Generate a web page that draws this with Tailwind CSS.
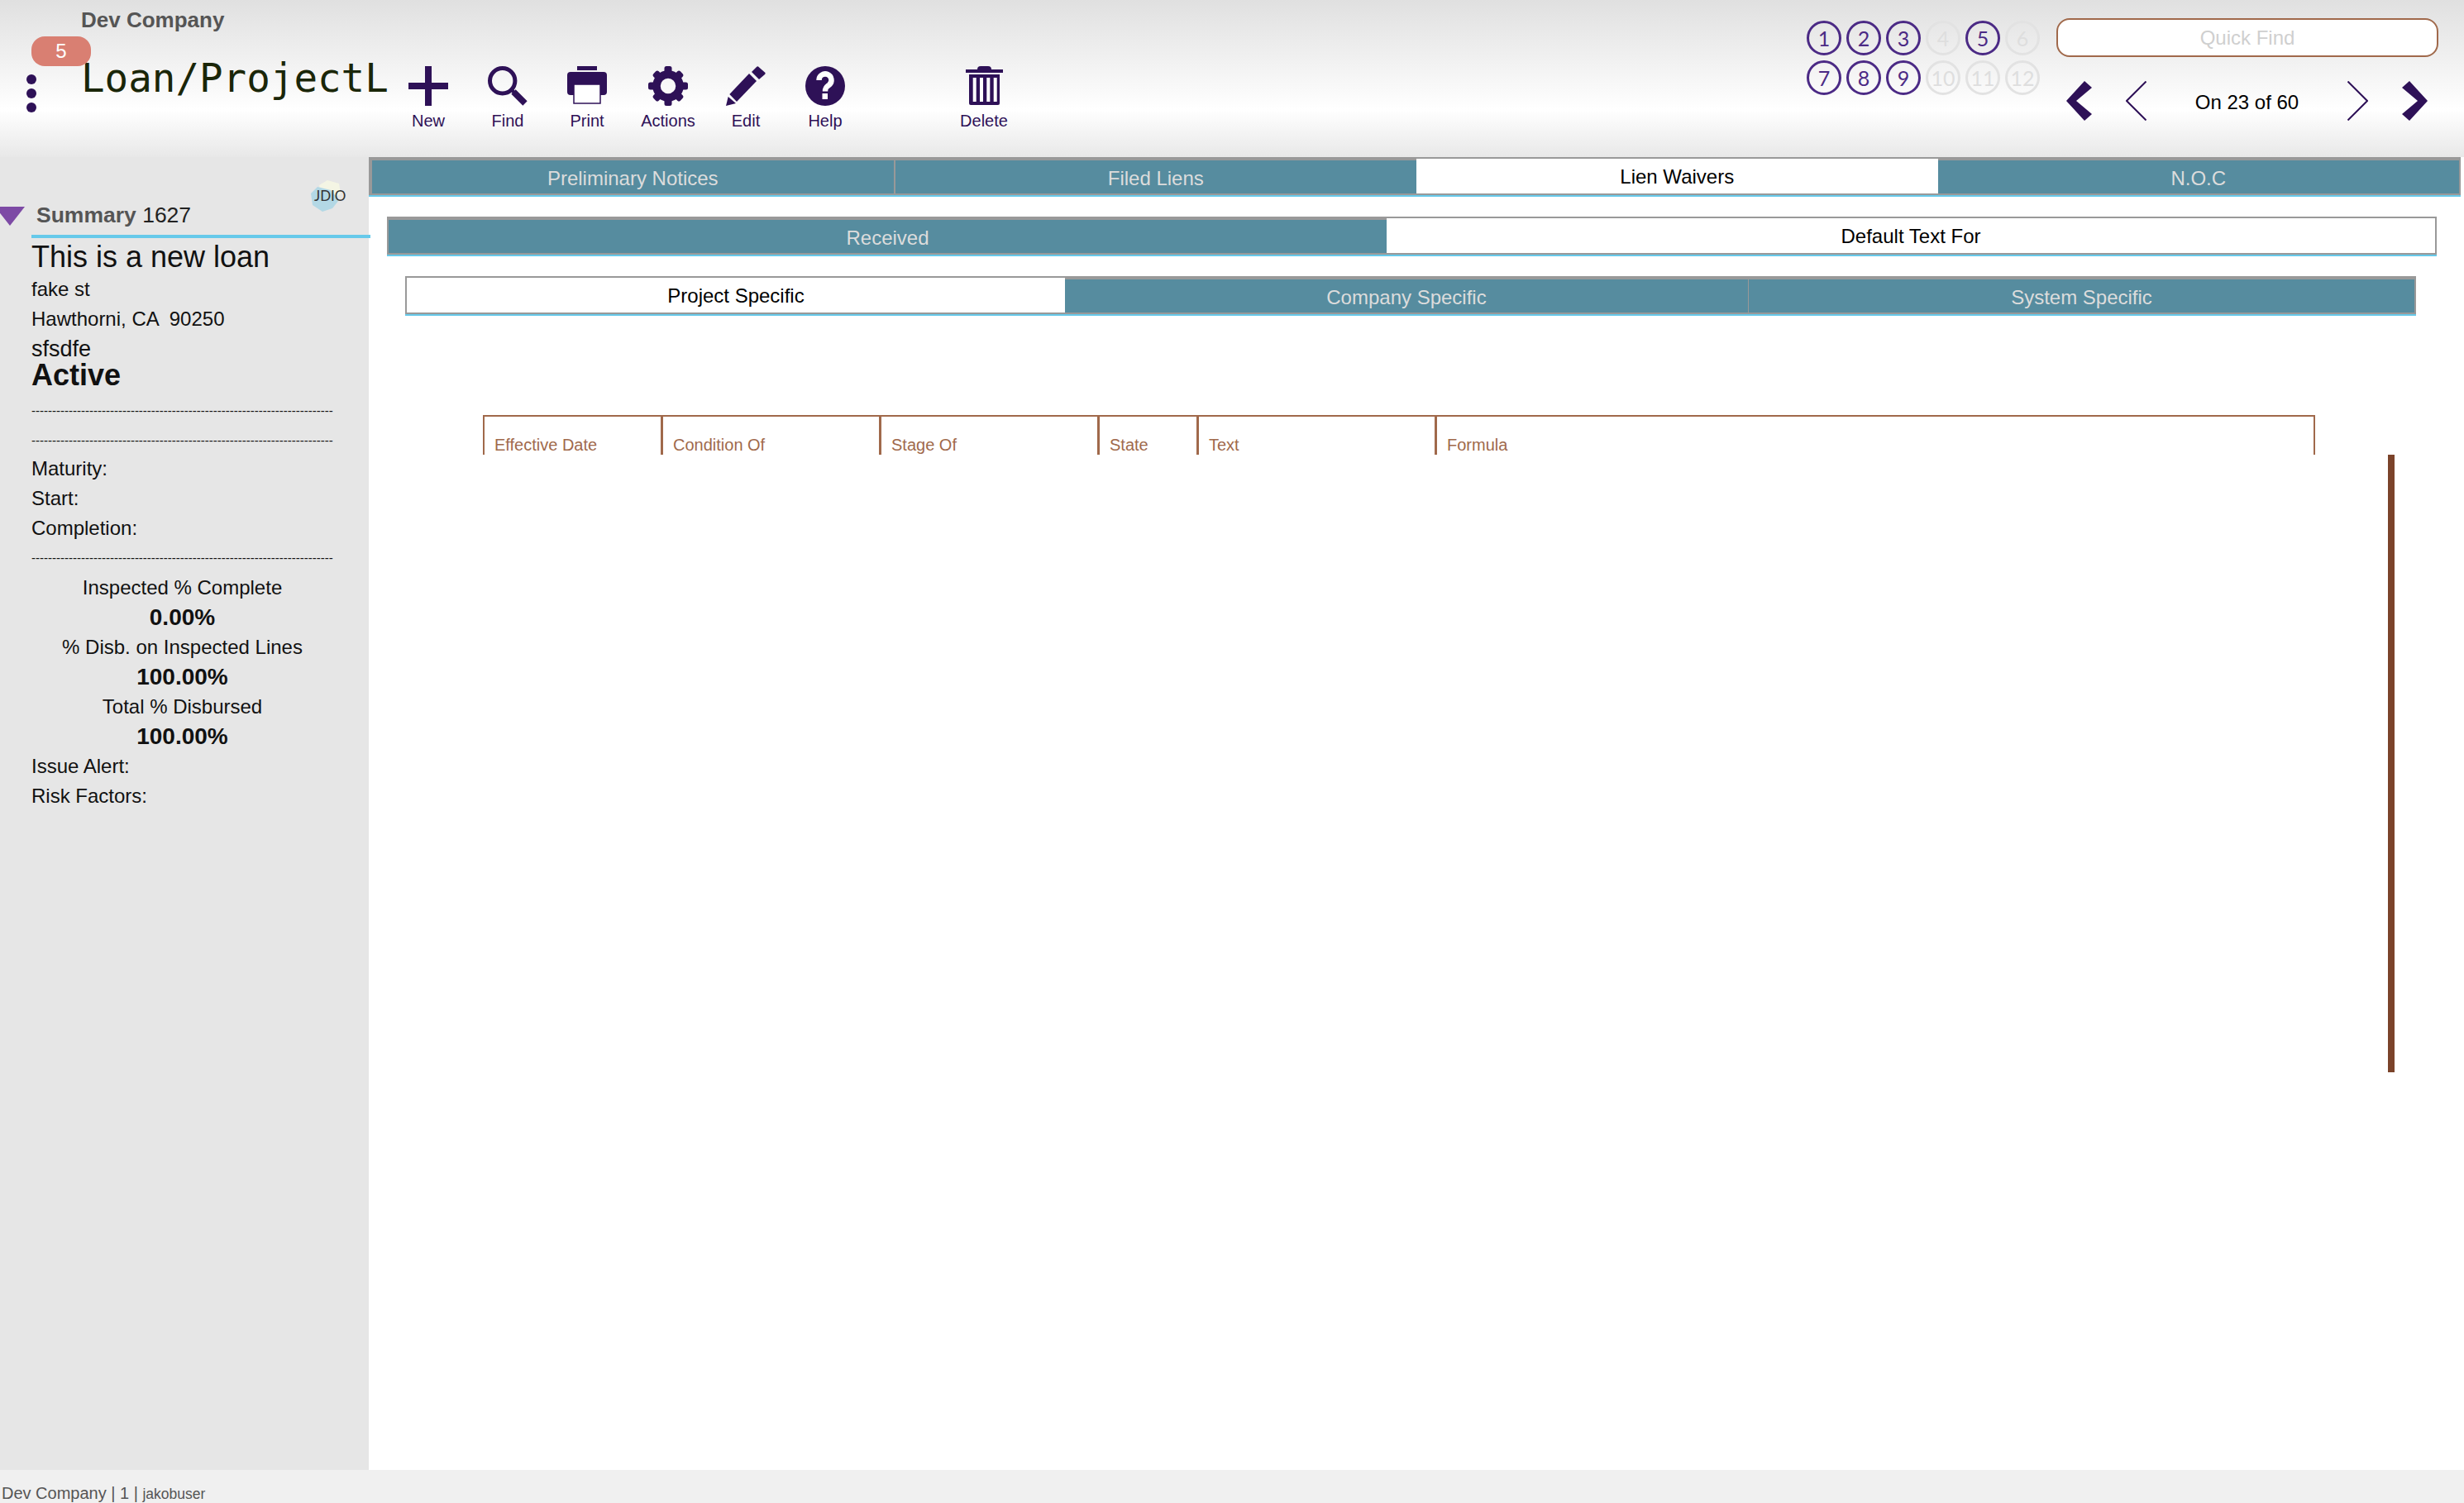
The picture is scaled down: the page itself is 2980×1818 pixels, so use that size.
<!DOCTYPE html>
<html lang="en">
<head>
    <meta charset="UTF-8">
    <title>Loan/Project Lien Waivers</title>
    <script src="https://cdn.jsdelivr.net/npm/@tailwindcss/browser@4"></script>
</head>
<body class="font-['Liberation_Sans',Arial,sans-serif] text-[#111]">
<div class="flex flex-col h-[1818px] w-[2980px] overflow-hidden bg-white">

    <!-- Top bar -->
    <header class="flex h-[190px] shrink-0 bg-linear-to-b from-[#e0e0e0] via-white via-[70%] to-[#e8e8e8]">
        <div class="relative w-[470px] shrink-0 pl-[98px] pt-[9px]">
            <div class="text-[26px] leading-[30px] font-bold text-[#555]">Dev Company</div>
            <div class="mt-[28px] font-['DejaVu_Sans_Mono',monospace] text-[47.500px] leading-[56px] whitespace-nowrap text-[#1a2608]">Loan/ProjectL</div>
            <div class="absolute left-[38px] top-[44px] w-[72px] h-[36px] rounded-[16px] bg-[#d97f72] text-white text-[24px] leading-[36px] text-center">5</div>
            <div class="absolute left-[32px] top-[90px] flex flex-col gap-[5px]">
                <span class="block w-[12px] h-[12px] rounded-full bg-[#2e1157]"></span>
                <span class="block w-[12px] h-[12px] rounded-full bg-[#2e1157]"></span>
                <span class="block w-[12px] h-[12px] rounded-full bg-[#2e1157]"></span>
            </div>
        </div>

        <!-- Toolbar -->
        <nav class="flex pt-[80px] text-[#2e1157] text-[20px] leading-[24px] text-center">
            <a class="block w-[96px]">
                <svg class="w-[48px] h-[48px] mx-auto mb-[6px]" viewBox="0 0 48 48" fill="#2e1157"><rect x="20" width="8" height="48"/><rect y="20" width="48" height="8"/></svg>
                New
            </a>
            <a class="block w-[96px]">
                <svg class="w-[48px] h-[48px] mx-auto mb-[6px]" viewBox="0 0 48 48" fill="none" stroke="#2e1157"><circle cx="17.700" cy="17.700" r="15.200" stroke-width="5"/><path d="M28 28 L32 32" stroke-width="4"/><path d="M31 31 L45 45" stroke-width="7.500"/></svg>
                Find
            </a>
            <a class="block w-[96px]">
                <svg class="w-[48px] h-[48px] mx-auto mb-[6px]" viewBox="0 0 48 48"><rect x="12" width="24" height="5" fill="#2e1157"/><path d="M4 7h40a4 4 0 0 1 4 4v20a4 4 0 0 1-4 4H4a4 4 0 0 1-4-4V11a4 4 0 0 1 4-4z" fill="#2e1157"/><rect x="8" y="22" width="32" height="23" fill="#fff" stroke="#2e1157" stroke-width="1.500"/></svg>
                Print
            </a>
            <a class="block w-[96px] pl-[4px]">
                <svg class="w-[48px] h-[48px] mx-auto mb-[6px]" viewBox="0 0 48 48" fill="#2e1157">
                    <circle cx="24" cy="24" r="14" fill="none" stroke="#2e1157" stroke-width="9.500"/>
                    <rect x="19.500" y="0" width="9" height="12" rx="2.500"/><rect x="19.500" y="36" width="9" height="12" rx="2.500"/>
                    <rect x="0" y="19.500" width="12" height="9" rx="2.500"/><rect x="36" y="19.500" width="12" height="9" rx="2.500"/>
                    <rect x="19.500" y="1" width="9" height="12" rx="2.500" transform="rotate(45 24 24)"/><rect x="19.500" y="1" width="9" height="12" rx="2.500" transform="rotate(135 24 24)"/>
                    <rect x="19.500" y="1" width="9" height="12" rx="2.500" transform="rotate(225 24 24)"/><rect x="19.500" y="1" width="9" height="12" rx="2.500" transform="rotate(315 24 24)"/>
                </svg>
                Actions
            </a>
            <a class="block w-[96px]">
                <svg class="w-[48px] h-[48px] mx-auto mb-[6px]" viewBox="0 0 48 48" fill="#2e1157"><path d="M39 0.500 L47.500 8 Q48 9 47 10 L40 16 L31 7 L37 1 Q38 0 39 0.500 Z"/><path d="M28 9 L37 18 L13 43 L4.300 34 Z"/><path d="M2.700 37 L12 45 L0 48 Z"/></svg>
                Edit
            </a>
            <a class="block w-[96px]">
                <svg class="w-[48px] h-[48px] mx-auto mb-[6px]" viewBox="0 0 48 48"><circle cx="24" cy="24" r="24" fill="#2e1157"/><path d="M16.500 17 a7.500 7.500 0 1 1 12.500 5.500 c-3 2.500 -5 3 -5 8" fill="none" stroke="#fff" stroke-width="6.500"/><rect x="20.500" y="33" width="6.500" height="7" fill="#fff"/></svg>
                Help
            </a>
            <div class="w-[96px]"></div>
            <a class="block w-[96px]">
                <svg class="w-[48px] h-[48px] mx-auto mb-[6px]" viewBox="0 0 48 48" fill="#2e1157"><path d="M16 4 Q16 0 20 0 H29 Q33 0 33 4 V5 H16 Z"/><rect x="2" y="4" width="45" height="4"/><path d="M6 10h37v35a2 2 0 0 1-2 2H8a2 2 0 0 1-2-2z"/><g fill="#fff"><rect x="10.700" y="14" width="4" height="29"/><rect x="19" y="14" width="4" height="29"/><rect x="27.300" y="14" width="4" height="29"/><rect x="35.700" y="14" width="4" height="29"/></g></svg>
                Delete
            </a>
        </nav>

        <!-- Record slots -->
        <div class="ml-auto pt-[25px] grid grid-cols-[repeat(6,42px)] auto-rows-[42px] gap-[6px] font-['Lato',sans-serif] text-[25px] text-center h-fit">
            <span class="rounded-full border-[3px] border-[#4b2a85] leading-[36px] text-[#4b2a85]">1</span>
            <span class="rounded-full border-[3px] border-[#4b2a85] leading-[36px] text-[#4b2a85]">2</span>
            <span class="rounded-full border-[3px] border-[#4b2a85] leading-[36px] text-[#4b2a85]">3</span>
            <span class="rounded-full border-[3px] border-[#e2e2e2] leading-[36px] text-[#dedede]">4</span>
            <span class="rounded-full border-[3px] border-[#4b2a85] leading-[36px] text-[#4b2a85]">5</span>
            <span class="rounded-full border-[3px] border-[#e2e2e2] leading-[36px] text-[#dedede]">6</span>
            <span class="rounded-full border-[3px] border-[#4b2a85] leading-[36px] text-[#4b2a85]">7</span>
            <span class="rounded-full border-[3px] border-[#4b2a85] leading-[36px] text-[#4b2a85]">8</span>
            <span class="rounded-full border-[3px] border-[#4b2a85] leading-[36px] text-[#4b2a85]">9</span>
            <span class="rounded-full border-[3px] border-[#e2e2e2] leading-[36px] text-[#dedede]">10</span>
            <span class="rounded-full border-[3px] border-[#e2e2e2] leading-[36px] text-[#dedede]">11</span>
            <span class="rounded-full border-[3px] border-[#e2e2e2] leading-[36px] text-[#dedede]">12</span>
        </div>

        <!-- Quick find and record nav -->
        <div class="w-[462px] ml-[20px] mr-[31px] pt-[22px] shrink-0">
            <div class="h-[47px] rounded-[16px] border-2 border-[#a0694b] bg-white text-[24px] leading-[43px] text-center text-[#cfcfcf]">Quick Find</div>
            <div class="mt-[29px] flex items-center h-[48px] text-[24px] text-black">
                <svg class="ml-[12px] w-[31px] h-[48px]" viewBox="0 0 31 48" fill="#2e1157"><path d="M22 0 L31 8 L12 24 L31 40 L22 48 L0 24 Z"/></svg>
                <svg class="ml-[41px] w-[25px] h-[48px]" viewBox="0 0 25 48" fill="none" stroke="#2e1157" stroke-width="2"><path d="M24.500 0.500 L1 24 L24.500 47.500"/></svg>
                <span class="flex-1 text-center pt-[4px]">On 23 of 60</span>
                <svg class="mr-[41px] w-[25px] h-[48px]" viewBox="0 0 25 48" fill="none" stroke="#2e1157" stroke-width="2"><path d="M0.500 0.500 L24 24 L0.500 47.500"/></svg>
                <svg class="mr-[13px] w-[31px] h-[48px]" viewBox="0 0 31 48" fill="#2e1157"><path d="M9 0 L0 8 L19 24 L0 40 L9 48 L31 24 Z"/></svg>
            </div>
        </div>
    </header>

    <div class="flex flex-1 min-h-0">
        <!-- Sidebar -->
        <aside class="relative w-[446px] shrink-0 bg-[#e6e6e6] text-[24px] leading-[36px]">
            <svg class="absolute left-0 top-[60px] w-[30px] h-[23px]" viewBox="0 0 30 23"><path d="M-6 0 H30 L12 23 Z" fill="#7d4aa5"/></svg>
            <svg class="absolute left-[374px] top-[28px] w-[40px] h-[38px]" viewBox="0 0 40 38"><path d="M12 6 L22 0 L36 4 L38 16 L30 22 L14 16 Z" fill="#f4f5e4"/><path d="M10 8 L26 12 L36 24 L28 34 L16 38 L4 30 L2 16 Z" fill="#b3d8e5" /></svg>
            <div class="absolute left-[380px] top-[35px] text-[17px] leading-[24px] font-['Lato',sans-serif] text-[#333]">JDIO</div>

            <div class="pl-[44px] pt-[53px] h-[94px] text-[26.500px] leading-[34px] text-[#222]"><span class="font-bold text-[#555]">Summary</span> 1627</div>
            <div class="ml-[38px] w-[410px] h-[4px] bg-[#66c9ea] relative"></div>

            <div class="pl-[38px] pr-[43px]">
                <div class="mt-[2px] text-[36px] leading-[42px]">This is a new loan</div>
                <div>fake st</div>
                <div class="whitespace-pre">Hawthorni, CA  90250</div>
                <div class="text-[27px]">sfsdfe</div>
                <div class="text-[36px] font-bold leading-[28px]">Active</div>
                <div class="mt-[11px] h-[36px] text-[15px] whitespace-nowrap">-------------------------------------------------------------------------</div>
                <div class="h-[36px] text-[15px] whitespace-nowrap">-------------------------------------------------------------------------</div>
                <div class="mt-[-2px]">Maturity:</div>
                <div>Start:</div>
                <div>Completion:</div>
                <div class="h-[36px] text-[15px] whitespace-nowrap">-------------------------------------------------------------------------</div>
                <div class="text-center">
                    <div>Inspected % Complete</div>
                    <div class="text-[28px] font-bold">0.00%</div>
                    <div>% Disb. on Inspected Lines</div>
                    <div class="text-[28px] font-bold">100.00%</div>
                    <div>Total % Disbursed</div>
                    <div class="text-[28px] font-bold">100.00%</div>
                </div>
                <div>Issue Alert:</div>
                <div>Risk Factors:</div>
            </div>
        </aside>

        <!-- Main -->
        <main class="flex-1 min-w-0 text-[24px] text-center relative">
            <div class="flex h-[48px] ml-0 mr-[4px] text-[#dcdcdc] border-b-2 border-[#66c9ea]">
                <div class="flex-1 bg-[#568c9f] border-t-4 border-l-4 border-r border-b-2 border-[#999] leading-[44px]">Preliminary Notices</div>
                <div class="flex-1 bg-[#568c9f] border-t-4 border-l border-b-2 border-[#999] leading-[44px]">Filed Liens</div>
                <div class="flex-1 bg-white border-t-2 border-b-2 border-[#999] text-black leading-[44px]">Lien Waivers</div>
                <div class="flex-1 bg-[#568c9f] border-t-4 border-r-2 border-b-2 border-[#999] leading-[44px]">N.O.C</div>
            </div>

            <div class="flex h-[48px] mt-[24px] ml-[22px] mr-[33px] text-[#dcdcdc] border-b-2 border-[#66c9ea]">
                <div class="w-[1209px] bg-[#568c9f] border-t-4 border-l-2 border-b-2 border-[#999] leading-[44px]">Received</div>
                <div class="flex-1 bg-white border-t-2 border-r-2 border-b-2 border-[#999] text-black leading-[44px]">Default Text For</div>
            </div>

            <div class="flex h-[48px] mt-[24px] ml-[44px] mr-[58px] text-[#dcdcdc] border-b-2 border-[#66c9ea]">
                <div class="w-[798px] bg-white border-t-2 border-l-2 border-b-2 border-[#999] text-black leading-[44px]">Project Specific</div>
                <div class="w-[827px] bg-[#568c9f] border-t-4 border-r border-b-2 border-[#999] leading-[44px]">Company Specific</div>
                <div class="flex-1 bg-[#568c9f] border-t-4 border-r-2 border-b-2 border-[#999] leading-[44px]">System Specific</div>
            </div>

            <!-- Table head -->
            <div class="flex h-[48px] mt-[120px] ml-[138px] w-[2216px] border-t-2 border-[#a0694b] text-left text-[20px] leading-[24px] text-[#a0694b]">
                <div class="w-[215px] border-l-2 border-[#a0694b] pl-[12px] pt-[22px]">Effective Date</div>
                <div class="w-[264px] border-l-[3px] border-[#a0694b] pl-[12px] pt-[22px]">Condition Of</div>
                <div class="w-[264px] border-l-[3px] border-[#a0694b] pl-[12px] pt-[22px]">Stage Of</div>
                <div class="w-[120px] border-l-[3px] border-[#a0694b] pl-[12px] pt-[22px]">State</div>
                <div class="w-[288px] border-l-[3px] border-[#a0694b] pl-[12px] pt-[22px]">Text</div>
                <div class="flex-1 border-l-[3px] border-r-2 border-[#a0694b] pl-[12px] pt-[22px]">Formula</div>
            </div>
            <div class="ml-[2442px] w-[8px] h-[747px] bg-[#7b432a]"></div>
        </main>
    </div>

    <footer class="h-[40px] shrink-0 bg-[#f0f0f0] pl-[2px] pt-[16px] text-[20px] leading-[24px] text-[#555]">Dev Company | 1 | <span class="text-[17.500px]">jakobuser</span></footer>
</div>
</body>
</html>
